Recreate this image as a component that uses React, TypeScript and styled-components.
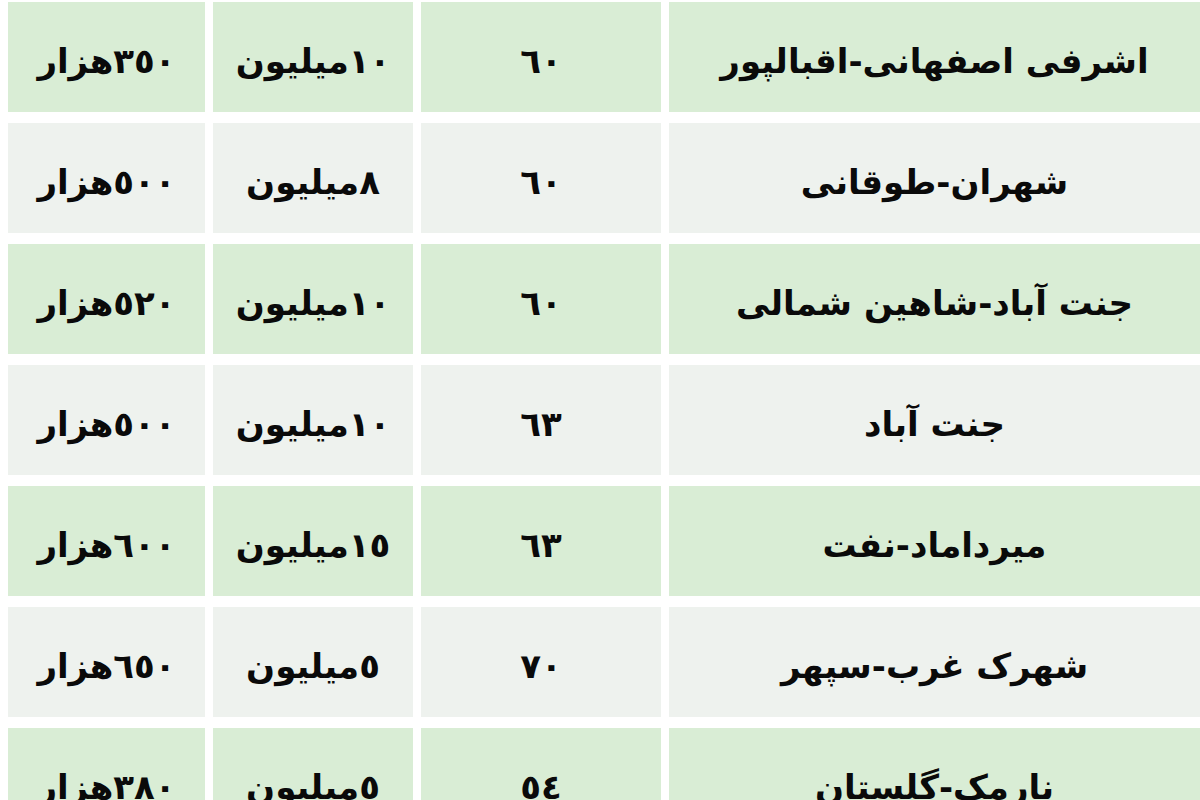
import * as React from "react";
import styled, { createGlobalStyle } from "styled-components";

const GlobalStyle = createGlobalStyle`
  html, body {
    margin: 0;
    padding: 0;
    background: #ffffff;
  }
  body {
    width: 1200px;
    height: 800px;
    overflow: hidden;
  }
`;

interface Rent {
  area: string;
  size: string;
  deposit: string;
  rent: string;
}

const rows: Rent[] = [
  { area: "اشرفی اصفهانی-اقبالپور", size: "٦٠", deposit: "١٠میلیون", rent: "٣٥٠هزار" },
  { area: "شهران-طوقانی", size: "٦٠", deposit: "٨میلیون", rent: "٥٠٠هزار" },
  { area: "جنت آباد-شاهین شمالی", size: "٦٠", deposit: "١٠میلیون", rent: "٥٢٠هزار" },
  { area: "جنت آباد", size: "٦٣", deposit: "١٠میلیون", rent: "٥٠٠هزار" },
  { area: "میرداماد-نفت", size: "٦٣", deposit: "١٥میلیون", rent: "٦٠٠هزار" },
  { area: "شهرک غرب-سپهر", size: "٧٠", deposit: "٥میلیون", rent: "٦٥٠هزار" },
  { area: "نارمک-گلستان", size: "٥٤", deposit: "٥میلیون", rent: "٣٨٠هزار" },
];

const Table = styled.div`
  direction: rtl;
  display: grid;
  grid-template-columns: 1fr 240px 200px 197px;
  grid-auto-rows: 110px;
  column-gap: 8px;
  row-gap: 11px;
  padding: 2px 0 0 8px;
  font-family: "DejaVu Sans", "Noto Sans", sans-serif;
`;

const Cell = styled.div<{ $green: boolean }>`
  display: flex;
  align-items: center;
  justify-content: center;
  padding-top: 8px;
  background: ${({ $green }) => ($green ? "#d9edd5" : "#eef2ee")};
  color: #0a0a0a;
  font-size: 34px;
  font-weight: bold;
  white-space: nowrap;
`;

const App: React.FC = () => {
  return (
    <>
      <GlobalStyle />
      <Table>
        {rows.map((row, i) => {
          const green = i % 2 === 0;
          return (
            <React.Fragment key={row.area}>
              <Cell $green={green}>{row.area}</Cell>
              <Cell $green={green}>{row.size}</Cell>
              <Cell $green={green}>{row.deposit}</Cell>
              <Cell $green={green}>{row.rent}</Cell>
            </React.Fragment>
          );
        })}
      </Table>
    </>
  );
};

export default App;
